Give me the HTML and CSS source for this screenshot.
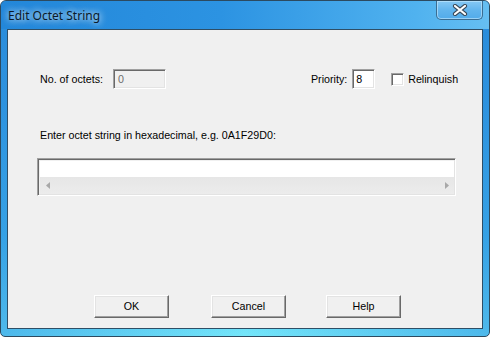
FILE: index.html
```html
<!DOCTYPE html>
<html>
<head>
<meta charset="utf-8">
<link rel="stylesheet" href="styles.css">
</head>
<body>
<div class="window">
  <div class="titlebar">
    <span class="title">Edit Octet String</span>
    <div class="close">
      <svg width="16" height="12" viewBox="0 0 16 12">
        <path d="M3 2 L13 10 M13 2 L3 10" stroke="#3a4a5a" stroke-width="4.2" stroke-linecap="round" fill="none"/>
        <path d="M3 2 L13 10 M13 2 L3 10" stroke="#ffffff" stroke-width="2.2" stroke-linecap="round" fill="none"/>
      </svg>
    </div>
  </div>
  <div class="client">
    <div class="row1">
      <span class="label">No. of octets:</span>
      <div class="field field-disabled octets">0</div>
      <span class="label priority-label">Priority:</span>
      <div class="field priority">8</div>
      <div class="checkbox"></div>
      <span class="label relinquish">Relinquish</span>
    </div>
    <div class="hexlabel">Enter octet string in hexadecimal, e.g. 0A1F29D0:</div>
    <div class="textbox">
      <div class="editarea"></div>
      <div class="hscroll">
        <svg width="5" height="7" viewBox="0 0 5 7"><path d="M4 0 L0 3.5 L4 7 Z" fill="#a8a8a8"/></svg>
        <svg width="5" height="7" viewBox="0 0 5 7"><path d="M1 0 L5 3.5 L1 7 Z" fill="#a8a8a8"/></svg>
      </div>
    </div>
    <div class="buttons">
      <div class="btn btn-ok">OK</div>
      <div class="btn btn-cancel">Cancel</div>
      <div class="btn btn-help">Help</div>
    </div>
  </div>
</div>
</body>
</html>
```
FILE: styles.css
```css
html, body {
  margin: 0;
  padding: 0;
  background: #ffffff;
}
.window {
  width: 490px;
  height: 337px;
  box-sizing: border-box;
  border: 1px solid #2c4a60;
  border-radius: 6px 6px 5px 5px;
  background:
    linear-gradient(to right, rgba(40,140,220,0.5) 0%, rgba(160,250,255,0.0) 50%, rgba(40,140,220,0.5) 100%),
    linear-gradient(to bottom, #2a8ad9 0%, #3399e2 30%, #44b6ee 70%, #74e6fa 100%);
  display: flex;
  flex-direction: column;
  overflow: hidden;
  font-family: "Liberation Sans", Arial, sans-serif;
  font-size: 10.7px;
  color: #000000;
}
.titlebar {
  height: 28px;
  display: flex;
  align-items: flex-start;
  background: linear-gradient(to right, #2387d9 0%, #2c93e2 45%, #50b2ef 85%, #66bff2 100%);
  flex: none;
}
.title {
  margin-left: 7px;
  margin-top: 7px;
  font-family: "Noto Sans", "Open Sans", sans-serif;
  font-size: 12px;
  line-height: 16px;
  color: #0b1a2a;
  text-shadow: 0 0 6px rgba(255,255,255,0.9), 0 0 10px rgba(255,255,255,0.6);
}
.close {
  margin-left: auto;
  margin-right: 6px;
  width: 45px;
  height: 18px;
  border: 1px solid #3b6d92;
  border-top: none;
  border-radius: 0 0 5px 5px;
  background: linear-gradient(to bottom, #86c8f4 0%, #62b5ee 50%, #52abea 100%);
  box-shadow: inset 0 0 0 1px rgba(200,235,255,0.6);
  display: flex;
  align-items: center;
  justify-content: center;
}
.client {
  margin: 0 6px;
  height: 300px;
  box-sizing: border-box;
  border: 1px solid #2e4e66;
  background: #f0f0f0;
  display: flex;
  flex-direction: column;
  padding-top: 39px;
  flex: none;
}
.row1 {
  display: flex;
  align-items: center;
  height: 20px;
  padding-left: 32px;
}
.label {
  white-space: nowrap;
  line-height: 13px;
}
.field {
  box-sizing: border-box;
  height: 20px;
  border-top: 1px solid #a0a0a0;
  border-left: 1px solid #a0a0a0;
  border-bottom: 1px solid #ffffff;
  border-right: 1px solid #ffffff;
  box-shadow: inset 1px 1px 0 #696969, inset -1px -1px 0 #e3e3e3;
  background: #ffffff;
  padding: 3px 0 0 4px;
  line-height: 13px;
}
.field-disabled {
  background: #f0f0f0;
  color: #6d6d6d;
}
.octets {
  width: 53px;
  margin-left: 10px;
}
.priority-label {
  margin-left: 145px;
}
.priority {
  width: 23px;
  margin-left: 5px;
  padding-left: 3px;
}
.checkbox {
  box-sizing: border-box;
  width: 13px;
  height: 13px;
  margin-left: 16px;
  background: #ffffff;
  border-top: 1px solid #a0a0a0;
  border-left: 1px solid #a0a0a0;
  border-bottom: 1px solid #ffffff;
  border-right: 1px solid #ffffff;
  box-shadow: inset 1px 1px 0 #696969, inset -1px -1px 0 #e3e3e3;
}
.relinquish {
  margin-left: 4px;
}
.hexlabel {
  margin-top: 40px;
  padding-left: 32px;
  line-height: 13px;
  white-space: nowrap;
}
.textbox {
  margin-top: 16px;
  margin-left: 29px;
  width: 419px;
  height: 38px;
  box-sizing: border-box;
  border-top: 1px solid #a0a0a0;
  border-left: 1px solid #a0a0a0;
  border-bottom: 1px solid #ffffff;
  border-right: 1px solid #ffffff;
  box-shadow: inset 1px 1px 0 #696969, inset -1px -1px 0 #e3e3e3;
  padding: 2px 1px 1px 2px;
  display: flex;
  flex-direction: column;
}
.editarea {
  flex: 1;
  background: #ffffff;
}
.hscroll {
  height: 17px;
  background: linear-gradient(to bottom, #e6e6e6, #ececec);
  display: flex;
  align-items: center;
  justify-content: space-between;
  padding: 0 5px 0 6px;
  flex: none;
}
.buttons {
  margin-top: 99px;
  display: flex;
  padding-left: 86px;
}
.btn {
  box-sizing: border-box;
  width: 75px;
  height: 23px;
  background: #f0f0f0;
  border-top: 1px solid #ffffff;
  border-left: 1px solid #ffffff;
  border-bottom: 1px solid #696969;
  border-right: 1px solid #696969;
  box-shadow: inset -1px -1px 0 #a0a0a0, inset 1px 1px 0 #e3e3e3;
  display: flex;
  align-items: center;
  justify-content: center;
  line-height: 13px;
  padding-bottom: 1px;
}
.btn-cancel {
  margin-left: 42px;
}
.btn-help {
  margin-left: 40px;
}
```
